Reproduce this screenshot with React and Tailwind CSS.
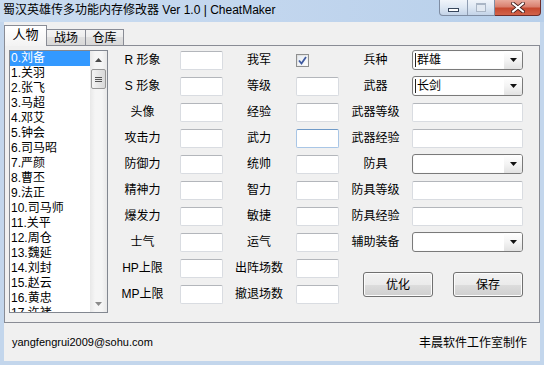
import React from 'react';

const heroes = ['刘备', '关羽', '张飞', '马超', '邓艾', '钟会', '司马昭', '严颜', '曹丕', '法正', '司马师', '关平', '周仓', '魏延', '刘封', '赵云', '黄忠', '许褚', '姜维'];

const leftRows = [
  ['R 形象', '我军', 'check'],
  ['S 形象', '等级', 'box'],
  ['头像', '经验', 'box'],
  ['攻击力', '武力', 'focus'],
  ['防御力', '统帅', 'box'],
  ['精神力', '智力', 'box'],
  ['爆发力', '敏捷', 'box'],
  ['士气', '运气', 'box'],
  ['HP上限', '出阵场数', 'box'],
  ['MP上限', '撤退场数', 'box'],
];

const rightRows = [
  ['兵种', 'combo', '群雄'],
  ['武器', 'combo', '长剑'],
  ['武器等级', 'text'],
  ['武器经验', 'text'],
  ['防具', 'combo', ''],
  ['防具等级', 'text'],
  ['防具经验', 'text'],
  ['辅助装备', 'combo', ''],
];

function TextBox({ w = 'w-[43px]', focus }) {
  return (
    <div
      className={
        w +
        ' h-[19px] bg-white rounded-[2px] border ' +
        (focus ? 'border-[#a9c6e6] border-t-[#6f9ac8]' : 'border-[#d9dce1] border-t-[#b3b6bb]')
      }
    />
  );
}

function Combo({ value }) {
  return (
    <div className="w-[111px] h-[20px] rounded-[3px] border border-[#7a7a7a] bg-white flex items-center shadow-[inset_0_0_0_1px_#fbfbfb] overflow-hidden">
      {value ? <div className="w-[1px] h-[14px] bg-[#222] ml-[2px]" /> : null}
      <span className="pl-[1px] leading-[18px]">{value}</span>
      <div className="ml-auto w-[18px] h-full bg-gradient-to-b from-white via-[#f4f4f4] to-[#e2e2e2] flex items-center justify-center">
        <svg width="7" height="4" viewBox="0 0 7 4">
          <polygon points="0,0 7,0 3.5,4" fill="#111" />
        </svg>
      </div>
    </div>
  );
}

function CheckBox() {
  return (
    <div className="w-[13px] h-[13px] border border-[#8e8f8f] bg-gradient-to-br from-[#dcdcdc] to-[#fafafa] p-[1px]">
      <div className="w-full h-full bg-gradient-to-br from-[#e6ecf3] to-[#fdfdfd] flex items-center justify-center">
        <svg width="9" height="9" viewBox="0 0 9 9">
          <path d="M1 4.5 L3.5 7.5 L8 1" fill="none" stroke="#3f5aa0" strokeWidth="1.8" />
        </svg>
      </div>
    </div>
  );
}

function WinButton({ children }) {
  return (
    <div className="w-[70px] h-[25px] rounded-[3px] border border-[#707070] bg-[linear-gradient(to_bottom,#f2f2f2_0%,#ebebeb_50%,#dddddd_50%,#cfcfcf_100%)] shadow-[inset_0_0_0_1px_#fcfcfc] flex items-center justify-center">
      {children}
    </div>
  );
}

function ScrollBar() {
  return (
    <div className="w-[17px] h-full flex flex-col bg-[#f0f0f0] bg-[linear-gradient(to_right,#e8e8e8,#f5f5f5_30%,#f5f5f5_70%,#e8e8e8)]">
      <div className="h-[17px] flex items-center justify-center">
        <svg width="7" height="4" viewBox="0 0 7 4">
          <polygon points="0,4 7,4 3.5,0" fill="#4a4a4a" />
        </svg>
      </div>
      <div className="mx-[1px] mt-[1px] h-[20px] rounded-[2px] border border-[#979797] bg-[linear-gradient(to_right,#f4f4f4,#e6e6e6_50%,#d8d8d8)] flex flex-col items-center justify-center gap-[1px]">
        <div className="w-[7px] h-[1px] bg-[#555]" />
        <div className="w-[7px] h-[1px] bg-[#555]" />
        <div className="w-[7px] h-[1px] bg-[#555]" />
      </div>
      <div className="flex-1" />
      <div className="h-[17px] flex items-center justify-center">
        <svg width="7" height="4" viewBox="0 0 7 4">
          <polygon points="0,0 7,0 3.5,4" fill="#8a8a8a" />
        </svg>
      </div>
    </div>
  );
}

export default function App() {
  return (
    <div className="w-[544px] h-[365px] bg-[#c3d6ec] flex flex-col overflow-hidden text-[12px] text-black font-['Liberation_Sans','Noto_Sans_CJK_SC',sans-serif]">
      {/* title bar */}
      <div className="h-[22px] flex items-start justify-between bg-gradient-to-r from-[#cadcf0] via-[#c2d6ee] to-[#b7cfea]">
        <div className="pl-[3px] h-[20px] leading-[20px] whitespace-nowrap">蜀汉英雄传多功能内存修改器 Ver 1.0 | CheatMaker</div>
        <div className="flex mr-[3px] h-[16px]">
          <div className="flex w-[56px] h-full rounded-bl-[4px] border border-t-0 border-[#7f8da3] overflow-hidden bg-gradient-to-b from-[#f0f4fa] via-[#dde7f3] to-[#c3d3e8]">
            <div className="w-[28px] border-r border-[#8f9db2] flex items-end justify-center pb-[3px]">
              <div className="w-[11px] h-[4px] bg-white border border-[#37465c]" />
            </div>
            <div className="w-[27px] flex items-center justify-center">
              <div className="w-[10px] h-[9px] border border-[#aab6c6] border-t-2 bg-[#e2e9f2]" />
            </div>
          </div>
          <div className="w-[46px] h-full rounded-br-[4px] border border-l-0 border-t-0 border-[#6e2d2a] bg-[linear-gradient(to_bottom,#e9ab9d_0%,#d9806f_45%,#c6492f_55%,#d2634a_100%)] flex items-center justify-center">
            <svg width="14" height="11" viewBox="0 0 14 11">
              <path d="M2 1.5 L12 9.5 M12 1.5 L2 9.5" stroke="#3b1a18" strokeWidth="3.6" strokeLinecap="square" />
              <path d="M2 1.5 L12 9.5 M12 1.5 L2 9.5" stroke="#ffffff" strokeWidth="2" strokeLinecap="square" />
            </svg>
          </div>
        </div>
      </div>

      {/* client area */}
      <div className="flex-1 mx-[4px] mb-[4px] bg-[#f0f0f0] flex flex-col">
        {/* tabs */}
        <div className="h-[23px] flex items-end">
          <div className="relative z-10 w-[43px] h-[21px] -mb-px border border-b-0 border-[#898c95] bg-gradient-to-b from-[#ffffff] to-[#f3f3f3] flex items-center justify-center pb-[2px] text-[13px]">
            人物
          </div>
          <div className="w-[40px] h-[16px] -ml-px border border-b-0 border-[#898c95] bg-[linear-gradient(to_bottom,#f4f4f4_0%,#ececec_50%,#e0e0e0_50%,#d8d8d8_100%)] flex items-center justify-center">
            战场
          </div>
          <div className="w-[39px] h-[16px] -ml-px border border-b-0 border-[#898c95] bg-[linear-gradient(to_bottom,#f4f4f4_0%,#ececec_50%,#e0e0e0_50%,#d8d8d8_100%)] flex items-center justify-center">
            仓库
          </div>
        </div>

        {/* tab panel */}
        <div className="h-[278px] border border-[#898c95] flex items-start">
          {/* hero list */}
          <div className="ml-[4px] mt-[4px] w-[99px] h-[263px] border border-[#828790] bg-white flex">
            <div className="flex-1 overflow-hidden">
              {heroes.map((h, i) => (
                <div
                  key={i}
                  className={'h-[15px] leading-[15px] pl-[1px] whitespace-nowrap ' + (i === 0 ? 'bg-[#3399ff] text-white' : '')}
                >
                  {i}.{h}
                </div>
              ))}
            </div>
            <ScrollBar />
          </div>

          {/* form */}
          <div className="ml-[2px] pt-[1px] flex">
            <div className="flex flex-col">
              {leftRows.map(([a, b, kind], i) => (
                <div key={i} className="h-[26px] flex items-center">
                  <div className="w-[65px] text-center whitespace-nowrap">{a}</div>
                  <div className="ml-[5px]">
                    <TextBox />
                  </div>
                  <div className="w-[72px] text-center whitespace-nowrap">{b}</div>
                  <div className="ml-[1px] w-[43px]">
                    {kind === 'check' ? <CheckBox /> : <TextBox focus={kind === 'focus'} />}
                  </div>
                </div>
              ))}
            </div>
            <div className="flex flex-col">
              {rightRows.map(([label, kind, value], i) => (
                <div key={i} className="h-[26px] flex items-center">
                  <div className="w-[73px] text-center whitespace-nowrap">{label}</div>
                  {kind === 'combo' ? <Combo value={value} /> : <TextBox w="w-[111px]" />}
                </div>
              ))}
              <div className="mt-[17px] pl-[24px] flex gap-[20px]">
                <WinButton>优化</WinButton>
                <WinButton>保存</WinButton>
              </div>
            </div>
          </div>
        </div>

        {/* footer */}
        <div className="flex-1 flex items-center justify-between pl-[8px] pr-[13px] pt-[1px]">
          <span className="text-[11px]">yangfengrui2009@sohu.com</span>
          <span>丰晨软件工作室制作</span>
        </div>
      </div>
    </div>
  );
}
